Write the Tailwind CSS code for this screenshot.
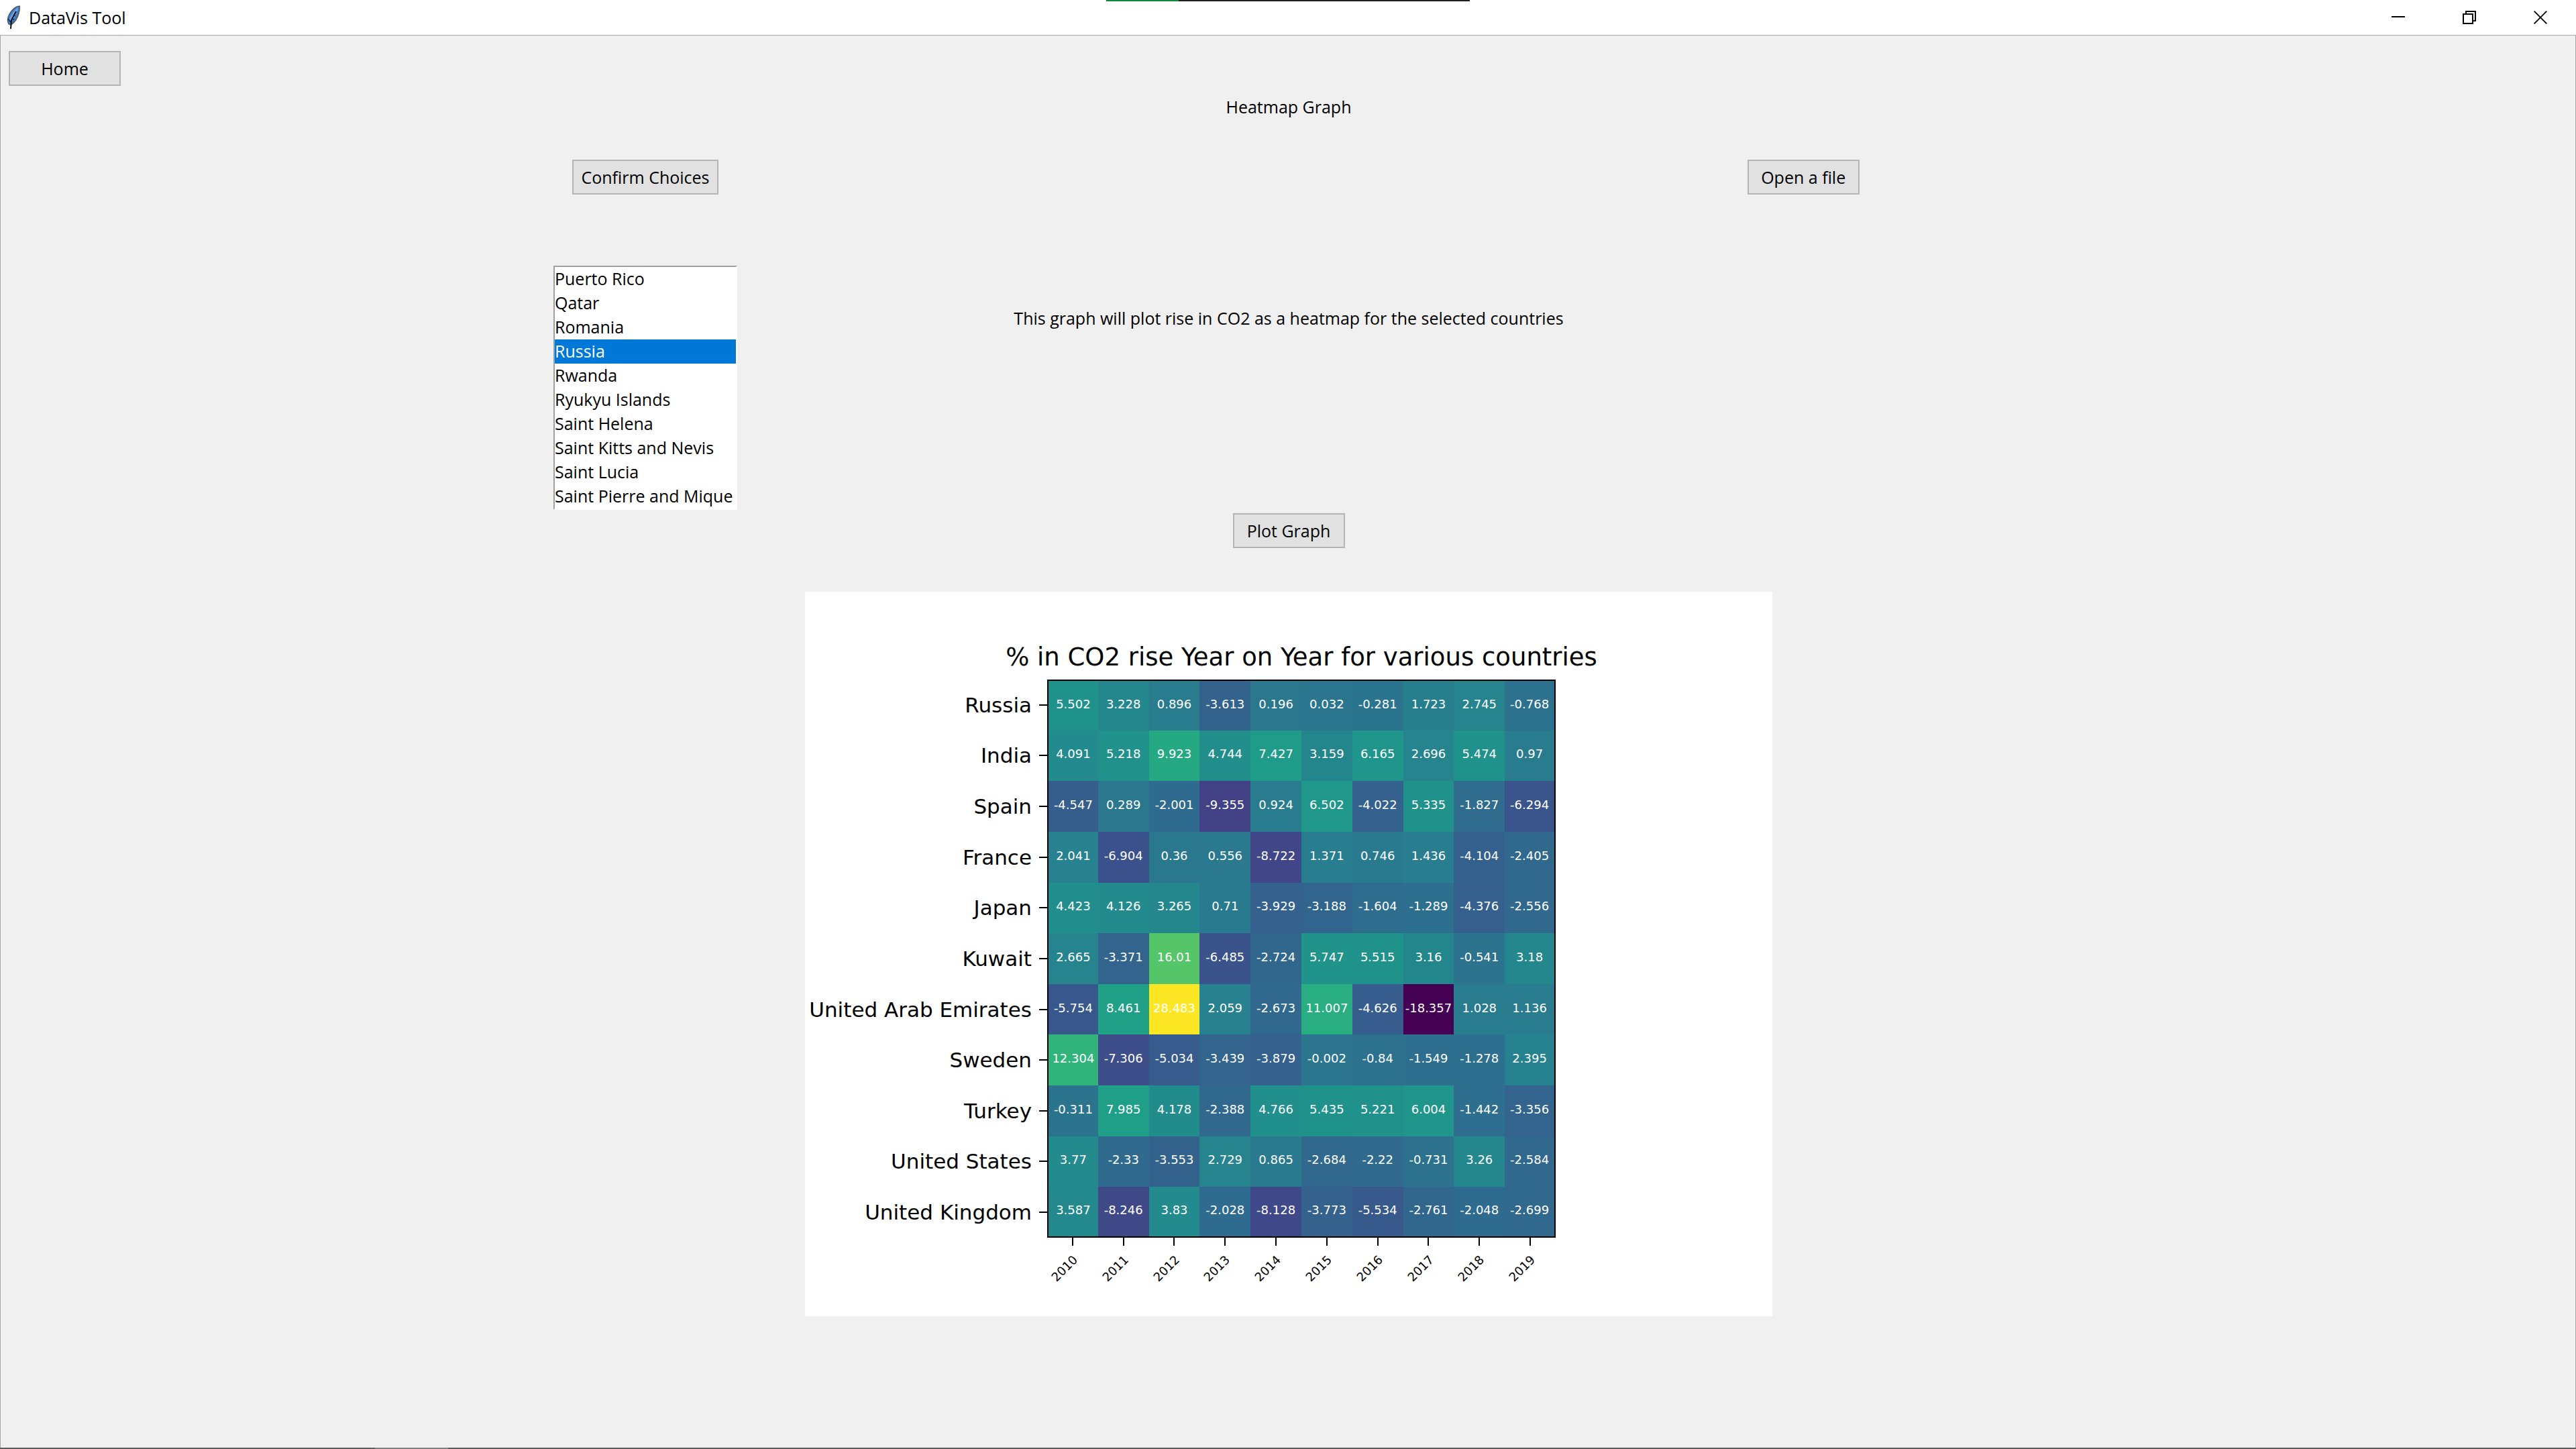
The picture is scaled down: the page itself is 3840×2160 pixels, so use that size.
<!DOCTYPE html>
<html lang="en">
<head>
<meta charset="utf-8">
<meta name="viewport" content="width=device-width, initial-scale=1">
<title>DataVis Tool</title>
<script src="https://cdn.jsdelivr.net/npm/@tailwindcss/browser@4"></script>
</head>
<body class="flex min-h-screen flex-col bg-[#f0f0f0] font-['Open_Sans','Noto_Sans',sans-serif] text-[25px] leading-9 text-black">

<header class="relative flex h-[53px] items-center border-b border-[#a6a6a6] bg-white">
  <svg class="ml-[9px] h-9 w-6 shrink-0" viewBox="0 0 24 36" aria-hidden="true">
    <path d="M20 1 C15 1 9 6 5 13 C2 18 2 24 4 28 L7 29 C13 26 17 19 19 12 C20 8 21 4 20 1Z" fill="#3f7cc4" stroke="#555" stroke-width="1.4"/>
    <path d="M18 3 C13 6 8 13 5 21 L8 24 C14 17 17 10 18 3Z" fill="#6aa6e6"/>
    <path d="M15 9 L8 22 L7 35" fill="none" stroke="#0c0c14" stroke-width="2"/>
    <path d="M3 20 L7 25 M11 14 L14 16 M8 20 L12 21" stroke="#16243c" stroke-width="1.4"/>
  </svg>
  <h1 class="ml-[10px] flex-1 text-[25px]">DataVis Tool</h1>
  <button type="button" aria-label="Minimize" class="flex h-full w-[106px] items-center justify-center">
    <svg class="size-5" viewBox="0 0 20 20"><path d="M0 9H20" stroke="#000" stroke-width="2"/></svg>
  </button>
  <button type="button" aria-label="Restore" class="flex h-full w-[106px] items-center justify-center">
    <svg class="size-5" viewBox="0 0 20 20" fill="none" stroke="#000" stroke-width="2"><path d="M1 5H15V19H1Z M5 5V1H19V15H15"/></svg>
  </button>
  <button type="button" aria-label="Close" class="flex h-full w-[106px] items-center justify-center">
    <svg class="size-5" viewBox="0 0 20 20"><path d="M.7 .7L19.3 19.3M19.3 .7L.7 19.3" stroke="#000" stroke-width="1.8"/></svg>
  </button>
  <div class="absolute left-1/2 top-0 flex h-0.5 w-[542px] -translate-x-1/2 bg-[#201f1f]"><span class="w-[108px] bg-[#10893e]"></span></div>
</header>

<main class="flex-1 border-x border-[#a6a6a6] pl-0.5 pt-[23px]">
  <button type="button" class="ml-2.5 block h-[52px] w-[167px] border-2 border-[#b4b4b4] bg-[#e1e1e1]">Home</button>
  <h2 class="mt-[13px] text-center">Heatmap Graph</h2>

  <div class="mt-[61px] grid grid-cols-20 justify-items-center">
    <button type="button" class="col-span-4 col-start-4 h-[52px] w-[218px] border-2 border-[#b4b4b4] bg-[#e1e1e1] whitespace-nowrap">Confirm Choices</button>
    <button type="button" class="col-span-4 col-start-13 h-[52px] w-[167px] border-2 border-[#b4b4b4] bg-[#e1e1e1]">Open a file</button>
  </div>

  <div class="mt-[106px] grid grid-cols-20 justify-items-center">
    <select multiple size="10" aria-label="Countries" class="col-span-4 col-start-4 row-start-1 h-[364px] w-[274px] overflow-hidden border-2 border-b-white border-l-[#a0a0a0] border-r-white border-t-[#a0a0a0] bg-white p-0 leading-9 *:h-9 *:p-0 *:checked:bg-linear-to-r *:checked:from-[#0078d7] *:checked:to-[#0078d7] *:checked:[-webkit-text-fill-color:#fff]">
      <option>Puerto Rico</option>
      <option>Qatar</option>
      <option>Romania</option>
      <option selected>Russia</option>
      <option>Rwanda</option>
      <option>Ryukyu Islands</option>
      <option>Saint Helena</option>
      <option>Saint Kitts and Nevis</option>
      <option>Saint Lucia</option>
      <option>Saint Pierre and Mique</option>
    </select>
    <p class="col-span-full row-start-1 pt-[60px]">This graph will plot rise in CO2 as a heatmap for the selected countries</p>
  </div>

  <button type="button" class="mx-auto mt-[5px] block h-[52px] w-[167px] border-2 border-[#b4b4b4] bg-[#e1e1e1]">Plot Graph</button>

  <figure class="mx-auto mt-[65px] w-[1442px] bg-white pb-[14px] pr-[323px] pt-[76px] font-['DejaVu_Sans',sans-serif]">
    <figcaption class="pl-[361px]"><h3 class="flex justify-center whitespace-nowrap text-[37px] leading-[44px]">% in CO2 rise Year on Year for various countries</h3></figcaption>
    <table class="mt-[11px] h-[935px] w-full table-fixed border-separate border-spacing-0">
      <colgroup><col class="w-[361px]"><col span="10"></colgroup>
      <tbody id="rows"></tbody>
      <tfoot><tr id="years" class="h-[103px]"><td></td></tr></tfoot>
    </table>
  </figure>
</main>

<footer class="flex h-0.5 bg-[#5c5c5c]"><span class="ml-[559px] w-[109px] bg-[#808080]"></span></footer>

<script>
const years = [2010, 2011, 2012, 2013, 2014, 2015, 2016, 2017, 2018, 2019];
const data = {
  "Russia": [5.502, 3.228, 0.896, -3.613, 0.196, 0.032, -0.281, 1.723, 2.745, -0.768],
  "India": [4.091, 5.218, 9.923, 4.744, 7.427, 3.159, 6.165, 2.696, 5.474, 0.97],
  "Spain": [-4.547, 0.289, -2.001, -9.355, 0.924, 6.502, -4.022, 5.335, -1.827, -6.294],
  "France": [2.041, -6.904, 0.36, 0.556, -8.722, 1.371, 0.746, 1.436, -4.104, -2.405],
  "Japan": [4.423, 4.126, 3.265, 0.71, -3.929, -3.188, -1.604, -1.289, -4.376, -2.556],
  "Kuwait": [2.665, -3.371, 16.01, -6.485, -2.724, 5.747, 5.515, 3.16, -0.541, 3.18],
  "United Arab Emirates": [-5.754, 8.461, 28.483, 2.059, -2.673, 11.007, -4.626, -18.357, 1.028, 1.136],
  "Sweden": [12.304, -7.306, -5.034, -3.439, -3.879, -0.002, -0.84, -1.549, -1.278, 2.395],
  "Turkey": [-0.311, 7.985, 4.178, -2.388, 4.766, 5.435, 5.221, 6.004, -1.442, -3.356],
  "United States": [3.77, -2.33, -3.553, 2.729, 0.865, -2.684, -2.22, -0.731, 3.26, -2.584],
  "United Kingdom": [3.587, -8.246, 3.83, -2.028, -8.128, -3.773, -5.534, -2.761, -2.048, -2.699]
};
// Viridis colour map, evenly spaced stops
const stops = "440154 481567 482677 453781 404788 39568c 33638d 2d708e 287d8e 238a8d 1f968b 20a387 29af7f 3cbb75 55c667 73d055 95d840 b8de29 dce319 fde725"
  .split(" ").map(h => [0, 2, 4].map(i => parseInt(h.slice(i, i + 2), 16)));
const all = Object.values(data).flat(), lo = Math.min(...all), hi = Math.max(...all);
function colour(v) {
  const t = (v - lo) / (hi - lo) * (stops.length - 1), i = Math.min(Math.floor(t), stops.length - 2);
  return `rgb(${stops[i].map((c, k) => Math.round(c + (stops[i + 1][k] - c) * (t - i))).join(",")})`;
}
const names = Object.keys(data);
document.getElementById("rows").innerHTML = names.map((name, r) => `<tr class="text-white">
  <th scope="row" class="p-0 text-[31px] font-normal leading-9 text-black"><div class="flex items-center justify-end gap-[11px] whitespace-nowrap">${name}<span class="h-0.5 w-3 bg-black"></span></div></th>
  ${data[name].map((v, c) => `<td class="border-black p-0 pb-1 text-center text-[18px] leading-6 ${r === 0 ? " border-t-2 " : ""}${r === names.length - 1 ? " border-b-2 " : ""}${c === 0 ? " border-l-2 " : ""}${c === years.length - 1 ? " border-r-2 " : ""}" style="background-color:${colour(v)}">${v}</td>`).join("")}</tr>`).join("");
document.getElementById("years").insertAdjacentHTML("beforeend", years.map(y => `<th scope="col" class="p-0 align-top text-[18px] font-normal leading-6">
  <div class="mx-auto h-3 w-0.5 bg-black"></div><div class="mt-[22px] pr-6"><div class="-rotate-45">${y}</div></div></th>`).join(""));
</script>
</body>
</html>
